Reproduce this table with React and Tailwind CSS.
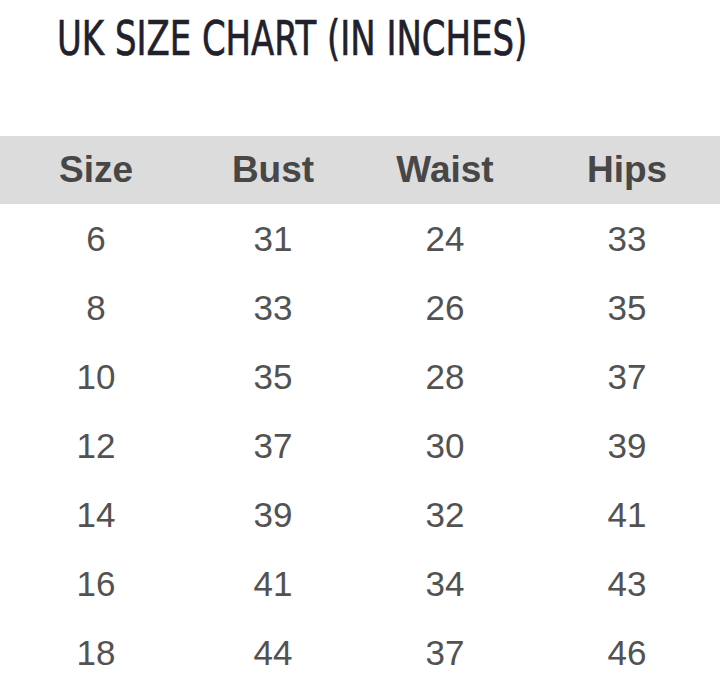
export default function App() {
  const rows = [
    ["6", "31", "24", "33"],
    ["8", "33", "26", "35"],
    ["10", "35", "28", "37"],
    ["12", "37", "30", "39"],
    ["14", "39", "32", "41"],
    ["16", "41", "34", "43"],
    ["18", "44", "37", "46"],
  ];
  const cols = "grid grid-cols-[192px_162px_182px_182px]";
  return (
    <div className="w-[720px] h-[684px] overflow-hidden bg-white">
      <div className="h-[136px] pl-[57px] pt-[10px]">
        <h1
          className="inline-block whitespace-nowrap origin-left scale-x-[0.707] text-[48px] leading-[56px] text-[#20212c] [-webkit-text-stroke:0.7px_#20212c]"
          style={{ fontFamily: '"DejaVu Sans", sans-serif' }}
        >
          UK SIZE CHART (IN INCHES)
        </h1>
      </div>
      <div
        className={`${cols} h-[68px] bg-[#dcdcdc] items-center text-[37px] font-bold text-[#474747]`}
        style={{ fontFamily: '"Liberation Sans", Arial, sans-serif' }}
      >
        <div className="text-center">Size</div>
        <div className="text-center">Bust</div>
        <div className="text-center">Waist</div>
        <div className="text-center">Hips</div>
      </div>
      <div style={{ fontFamily: '"Liberation Sans", Arial, sans-serif' }}>
        {rows.map((r, i) => (
          <div key={i} className={`${cols} h-[69px] pt-[2px] items-center text-[35px] text-[#525252]`}>
            {r.map((c, j) => (
              <div key={j} className="text-center">{c}</div>
            ))}
          </div>
        ))}
      </div>
    </div>
  );
}
